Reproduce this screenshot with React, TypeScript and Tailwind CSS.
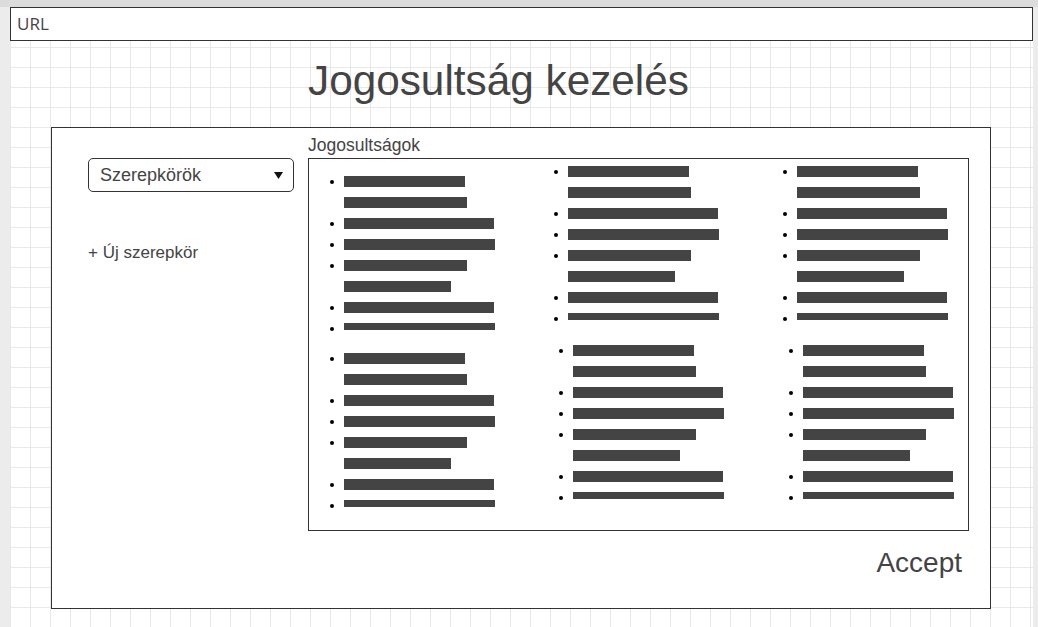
import React from "react";

const widths = [121, 123, 150, 151, 123, 107, 150, 151];
const bullets = [true, false, true, true, true, false, true, true];

const BarList = ({ className = "" }: { className?: string }) => (
    <div className={`flex flex-col gap-[10px] ${className}`}>
        {widths.map((w, i) => (
            <div key={i} className="flex h-[11px] items-start">
                <span className={`mt-[4px] h-[4px] w-[4px] shrink-0 rounded-full ${bullets[i] ? "bg-black" : ""}`} />
                <div
                    className={`ml-[10px] bg-[#444444] ${i === widths.length - 1 ? "h-[7px]" : "h-[11px]"}`}
                    style={{ width: w }}
                />
            </div>
        ))}
    </div>
);

export default function App() {
    return (
        <div className="flex h-[627px] w-[1038px] flex-col overflow-hidden bg-[#ececec] font-['Liberation_Sans',Arial,sans-serif] text-[#444444]">
            <div className="h-[7px] shrink-0 bg-[#dcdcdc]" />
            <div className="ml-[10px] mr-[5px] flex-1 bg-white bg-[linear-gradient(to_right,#e8e8e8_1px,transparent_1px),linear-gradient(to_bottom,#e8e8e8_1px,transparent_1px)] bg-[size:20px_20px]">
                {/* url bar */}
                <div className="flex h-[34px] items-center border border-[#333333] bg-white pl-[6px] text-[17px] font-['Open_Sans',sans-serif]">
                    URL
                </div>

                <h1 className="ml-[298px] mt-[19px] h-[42px] text-[42.3px] leading-none">Jogosultság kezelés</h1>

                <div className="ml-[41px] mt-[25px] flex h-[482px] w-[940px] border border-[#333333] bg-white">
                    <div className="flex w-[256px] flex-col pl-[36px] pt-[30px]">
                        <div className="flex h-[34px] w-[206px] items-center justify-between rounded-[5px] border border-[#333333] pl-[11px] pr-[10px]">
                            <span className="text-[18px] leading-none">Szerepkörök</span>
                            <svg width="9" height="7" viewBox="0 0 9 7">
                                <path d="M0 0 L9 0 L4.5 7 Z" fill="#111111" />
                            </svg>
                        </div>
                        <div className="mt-[52px] text-[17px] leading-none">+ Új szerepkör</div>
                    </div>

                    <div className="flex flex-col pt-[9px]">
                        <div className="h-[17px] text-[17.5px] leading-none">Jogosultságok</div>
                        <div className="mt-[4px] flex h-[373px] w-[661px] border border-[#333333]">
                            <div className="flex w-[224px] flex-col gap-[19px] pl-[21px] pt-[17px]">
                                <BarList />
                                <BarList />
                            </div>
                            <div className="flex w-[229px] flex-col gap-[21px] pl-[21px] pt-[7px]">
                                <BarList />
                                <BarList className="ml-[5px]" />
                            </div>
                            <div className="flex flex-col gap-[21px] pl-[21px] pt-[7px]">
                                <BarList />
                                <BarList className="ml-[6px]" />
                            </div>
                        </div>
                        <div className="mr-[7px] mt-[18px] self-end text-[28px] leading-none">Accept</div>
                    </div>
                </div>
            </div>
        </div>
    );
}
